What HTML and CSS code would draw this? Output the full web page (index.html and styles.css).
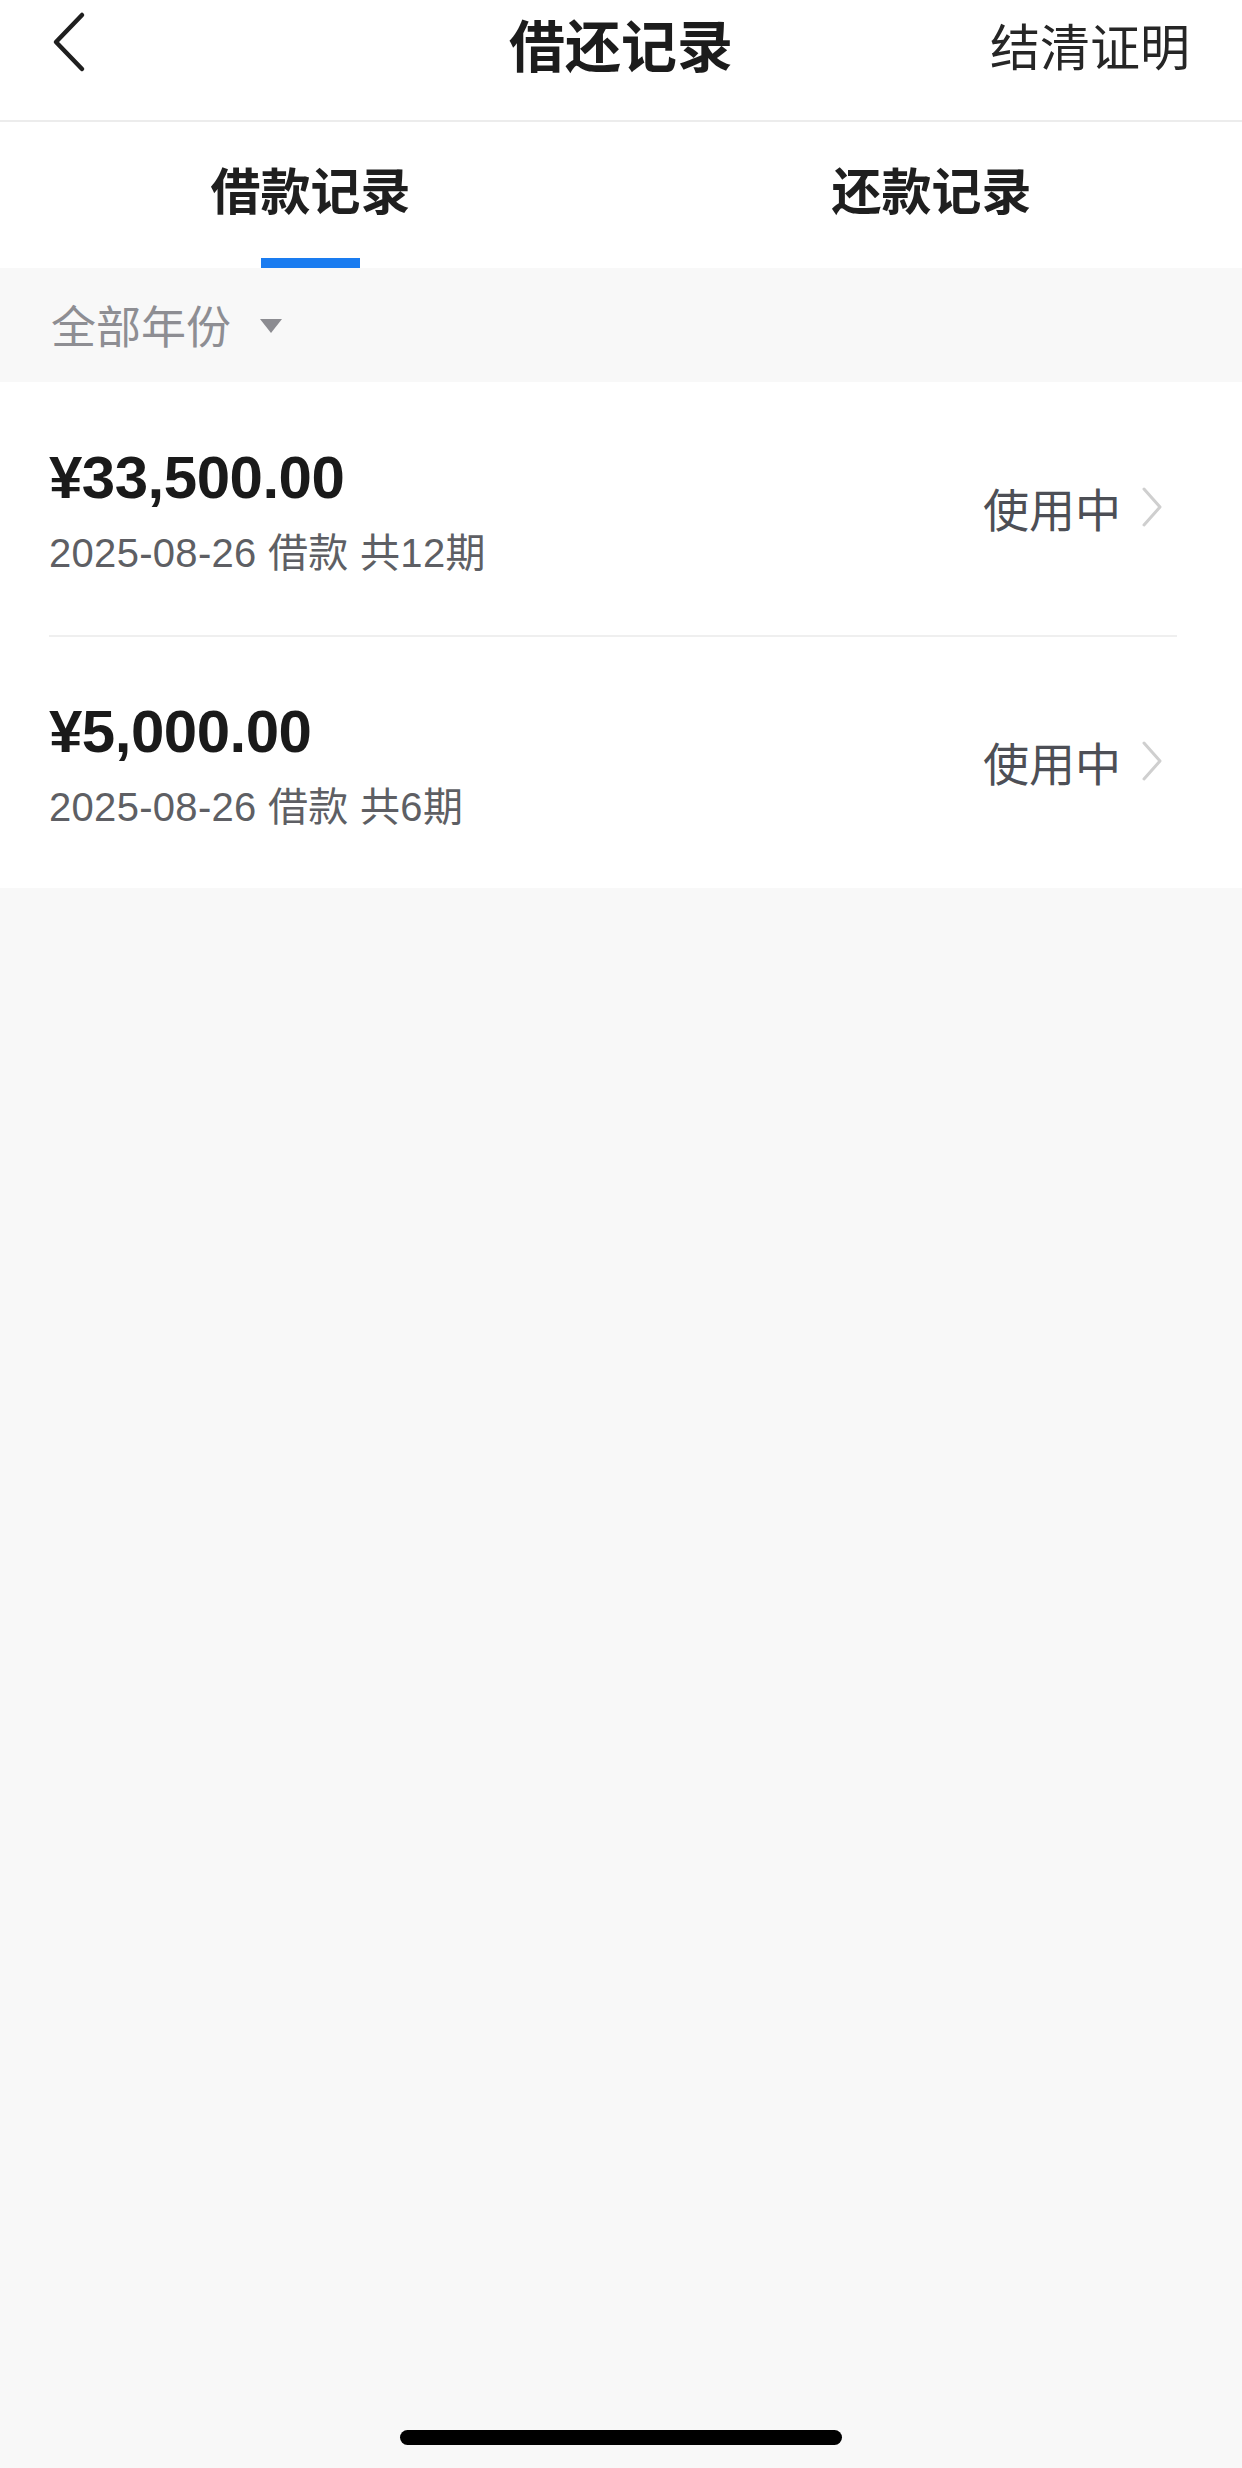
FILE: index.html
```html
<!DOCTYPE html>
<html lang="zh-CN">
<head>
<meta charset="utf-8">
<title>借还记录</title>
<link rel="stylesheet" href="styles.css">
</head>
<body>
<div class="page">
  <header class="nav">
    <div class="nav-left">
      <svg class="back" width="120" height="92" viewBox="0 0 120 92">
        <path d="M82 15 L56 42 L82 69" fill="none" stroke="#1f1f1f" stroke-width="4.5" stroke-linecap="round" stroke-linejoin="round"/>
      </svg>
    </div>
    <div class="nav-title">借还记录</div>
    <div class="nav-right">结清证明</div>
  </header>

  <nav class="tabs">
    <div class="tab active">
      <span class="tab-label">借款记录</span>
      <span class="tab-bar"></span>
    </div>
    <div class="tab">
      <span class="tab-label">还款记录</span>
      <span class="tab-bar"></span>
    </div>
  </nav>

  <div class="filter">
    <span class="filter-label">全部年份</span>
    <svg class="filter-arrow" width="22" height="14" viewBox="0 0 22 14"><path d="M0 0 H22 L11 14 Z" fill="#8c8c91"/></svg>
  </div>

  <section class="list">
    <div class="item">
      <div class="item-main">
        <div class="amount">¥33,500.00</div>
        <div class="meta">2025-08-26 借款 共12期</div>
      </div>
      <div class="item-side">
        <span class="status">使用中</span>
        <svg class="chev" width="22" height="40" viewBox="0 0 22 40"><path d="M3 2 L19 20 L3 38" fill="none" stroke="#cfcfcf" stroke-width="3" stroke-linecap="round" stroke-linejoin="round"/></svg>
      </div>
    </div>
    <div class="item">
      <div class="item-main">
        <div class="amount">¥5,000.00</div>
        <div class="meta">2025-08-26 借款 共6期</div>
      </div>
      <div class="item-side">
        <span class="status">使用中</span>
        <svg class="chev" width="22" height="40" viewBox="0 0 22 40"><path d="M3 2 L19 20 L3 38" fill="none" stroke="#cfcfcf" stroke-width="3" stroke-linecap="round" stroke-linejoin="round"/></svg>
      </div>
    </div>
  </section>

  <div class="home-indicator"></div>
</div>
</body>
</html>
```

FILE: styles.css
```css
* { box-sizing: border-box; }

html, body {
  margin: 0;
  padding: 0;
  background: #f8f8f8;
}

body {
  font-family: "Liberation Sans", "Noto Sans CJK SC", sans-serif;
  color: #1f1f1f;
}

.page {
  position: relative;
  width: 1242px;
  height: 2468px;
  background: #f8f8f8;
  overflow: hidden;
}

/* Header */
.nav {
  display: grid;
  grid-template-columns: 1fr auto 1fr;
  align-items: center;
  height: 122px;
  padding-bottom: 28px;
  background: #fff;
  border-bottom: 2px solid #ececec;
}

.nav-left {
  display: flex;
  align-items: center;
  height: 92px;
}

.back { display: block; }

.nav-title {
  margin-top: -6px;
  font-family: "Noto Sans CJK SC", sans-serif;
  font-size: 56px;
  font-weight: 700;
  line-height: 92px;
  color: #1c1c1c;
}

.nav-right {
  justify-self: end;
  margin-top: -5px;
  padding-right: 52px;
  font-family: "Noto Sans CJK SC", sans-serif;
  font-size: 50px;
  font-weight: 400;
  line-height: 92px;
  color: #262626;
}

/* Tabs */
.tabs {
  display: flex;
  height: 146px;
  background: #fff;
}

.tab {
  flex: 1;
  display: flex;
  flex-direction: column;
  align-items: center;
}

.tab-label {
  margin-top: 36px;
  font-family: "Noto Sans CJK SC", sans-serif;
  font-size: 50px;
  font-weight: 700;
  line-height: 60px;
  color: #1f1f1f;
}

.tab-bar {
  margin-top: auto;
  width: 99px;
  height: 10px;
  background: transparent;
}

.tab.active .tab-bar {
  background: #1a7cf0;
}

/* Filter */
.filter {
  display: flex;
  align-items: center;
  gap: 29px;
  height: 114px;
  padding-left: 51px;
  background: #f8f8f8;
}

.filter-label {
  font-family: "Noto Sans CJK SC", sans-serif;
  font-size: 45px;
  line-height: 60px;
  color: #8e8e93;
}

.filter-arrow { display: block; margin-top: 2px; }

/* List */
.list {
  background: #fff;
  padding: 0 65px 0 49px;
}

.item {
  display: flex;
  align-items: center;
  justify-content: space-between;
  height: 253px;
  padding-right: 14px;
}

.item + .item {
  border-top: 2px solid #efefef;
}

.item-main {
  display: flex;
  flex-direction: column;
  gap: 15px;
  padding-top: 4px;
}

.amount {
  font-family: "Liberation Sans", "Noto Sans CJK SC", sans-serif;
  font-size: 60px;
  font-weight: 700;
  line-height: 70px;
  color: #1a1a1a;
  letter-spacing: -0.5px;
}

.meta {
  font-family: "Liberation Sans", "Noto Sans CJK SC", sans-serif;
  font-size: 40px;
  line-height: 50px;
  letter-spacing: 0.3px;
  color: #5e5f64;
}

.item-side {
  display: flex;
  align-items: center;
  gap: 20px;
  padding-bottom: 4px;
}

.status {
  font-family: "Noto Sans CJK SC", sans-serif;
  font-size: 46px;
  line-height: 60px;
  color: #4d4f56;
}

.chev { display: block; }

/* Home indicator overlay */
.home-indicator {
  position: absolute;
  left: 400px;
  bottom: 23px;
  width: 442px;
  height: 15px;
  border-radius: 8px;
  background: #000;
}
```
